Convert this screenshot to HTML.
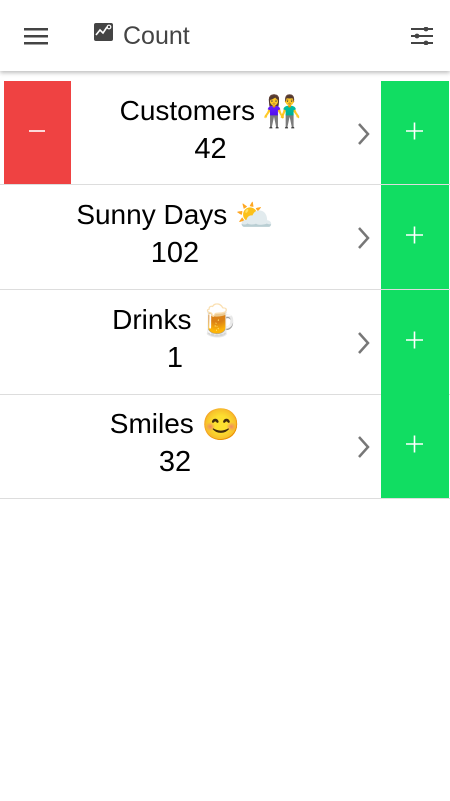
<!DOCTYPE html>
<html><head><style>
body{margin:0;width:450px;height:801px;background:#fff;font-family:"Liberation Sans",sans-serif;overflow:hidden;position:relative}
.hdr{position:absolute;left:0;top:0;width:450px;height:71px;background:#fff;box-shadow:0 2px 4px rgba(0,0,0,.25)}
.row{position:absolute;left:0;width:450px;height:104px;border-bottom:1px solid #ddd}
.content{position:absolute;top:0;height:104px;right:100px;text-align:center;color:#000}
.t{font-size:28px;margin-top:13px;line-height:34px;white-space:nowrap}
.n{font-size:29px;line-height:36px;margin-top:2px}
.minus{position:absolute;left:4px;top:0;width:67px;height:103px;background:#ef4242}
.plus{position:absolute;left:381px;top:0;width:68px;height:104px;background:#11dd62}
.minus svg,.plus svg{position:absolute;left:25px;top:41px}
.chev{position:absolute;left:356px;top:41px}
.e{font-size:31px;vertical-align:-2px}
</style></head><body>
<div class="hdr">
<svg style="position:absolute;left:24px;top:27px" width="24" height="18"><rect x="0" y="1" width="24" height="2.5" fill="#444"/><rect x="0" y="8" width="24" height="2.5" fill="#444"/><rect x="0" y="15" width="24" height="2.5" fill="#444"/></svg>
<svg style="position:absolute;left:94px;top:23px" width="20" height="19"><rect x="0" y="0" width="19" height="18" rx="2" fill="#444"/><path d="M2 12 L6 7 L9 10 L13 4" stroke="#fff" stroke-width="1.6" fill="none"/><circle cx="15" cy="4" r="1.8" fill="none" stroke="#fff" stroke-width="1.2"/></svg>
<div style="position:absolute;left:123px;top:22px;font-size:25px;color:#444">Count</div>
<svg style="position:absolute;left:411px;top:27px" width="22" height="18"><g stroke="#444" stroke-width="2"><line x1="0" y1="2" x2="22" y2="2"/><line x1="0" y1="9" x2="22" y2="9"/><line x1="0" y1="16" x2="22" y2="16"/></g><circle cx="15" cy="2" r="2.4" fill="#444"/><circle cx="6" cy="9" r="2.4" fill="#444"/><circle cx="15" cy="16" r="2.4" fill="#444"/></svg>
</div>

<div class="row" style="top:81px;height:103px">
<div class="minus"><svg width="18" height="18"><line x1="0" y1="9" x2="16" y2="9" stroke="#fff" stroke-width="1.6"/></svg></div>
<div class="content" style="left:71px"><div class="t">Customers <span class="e">👫</span></div><div class="n">42</div></div>
<svg class="chev" width="16" height="24"><path d="M3 2 L12 12 L3 22" stroke="#777" stroke-width="2.5" fill="none"/></svg>
<div class="plus" style="height:103px"><svg width="18" height="18"><path d="M0 9 H17 M8.5 0.5 V17.5" stroke="#fff" stroke-width="1.6"/></svg></div>
</div>
<div class="row" style="top:185px">
<div class="content" style="left:0"><div class="t">Sunny Days <span class="e">⛅</span></div><div class="n">102</div></div>
<svg class="chev" width="16" height="24"><path d="M3 2 L12 12 L3 22" stroke="#777" stroke-width="2.5" fill="none"/></svg>
<div class="plus"><svg width="18" height="18"><path d="M0 9 H17 M8.5 0.5 V17.5" stroke="#fff" stroke-width="1.6"/></svg></div>
</div>
<div class="row" style="top:290px">
<div class="content" style="left:0"><div class="t">Drinks <span class="e">🍺</span></div><div class="n">1</div></div>
<svg class="chev" width="16" height="24"><path d="M3 2 L12 12 L3 22" stroke="#777" stroke-width="2.5" fill="none"/></svg>
<div class="plus"><svg width="18" height="18"><path d="M0 9 H17 M8.5 0.5 V17.5" stroke="#fff" stroke-width="1.6"/></svg></div>
</div>
<div class="row" style="top:394px">
<div class="content" style="left:0"><div class="t">Smiles <span class="e">😊</span></div><div class="n">32</div></div>
<svg class="chev" width="16" height="24"><path d="M3 2 L12 12 L3 22" stroke="#777" stroke-width="2.5" fill="none"/></svg>
<div class="plus"><svg width="18" height="18"><path d="M0 9 H17 M8.5 0.5 V17.5" stroke="#fff" stroke-width="1.6"/></svg></div>
</div>
</body></html>
